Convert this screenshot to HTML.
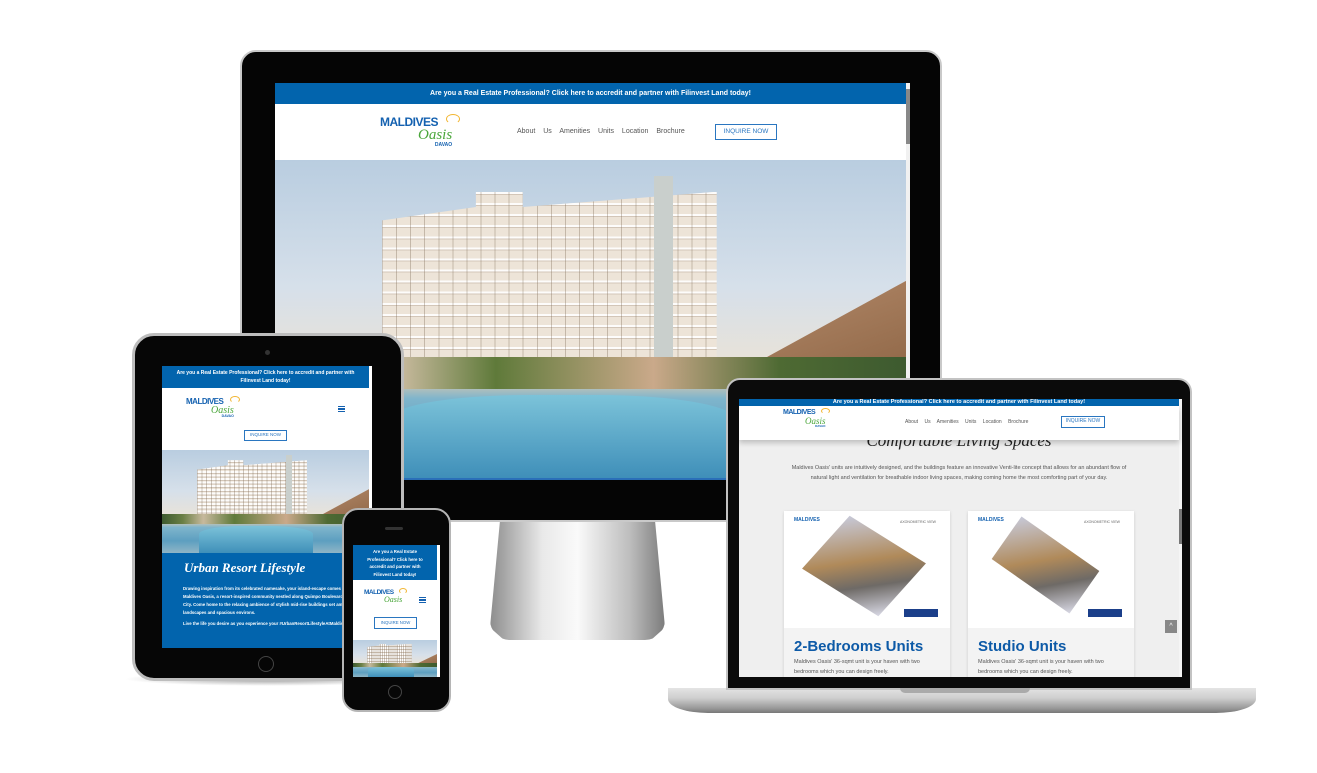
<!DOCTYPE html>
<html><head><meta charset="utf-8"><style>
*{margin:0;padding:0;box-sizing:border-box}
body{width:1317px;height:773px;background:#fff;position:relative;overflow:hidden;font-family:"Liberation Sans",sans-serif}
.a{position:absolute}
.blue{background:#0264ad;color:#fff;text-align:center;font-weight:bold}
.hero{position:absolute;overflow:hidden;background:linear-gradient(180deg,#b9cde0 0%,#d6e0ea 40%,#e7e2da 62%,#cfc6b2 70%,#7fb5cc 75%,#5d9fc0 88%,#8fb5c6 100%)}
.hero .bld{position:absolute;left:17%;top:10%;width:53%;height:60%;background:#ede4d8;
background-image:repeating-linear-gradient(90deg,rgba(120,100,80,.35) 0 1px,transparent 1px 4.2%),repeating-linear-gradient(180deg,rgba(255,255,255,.9) 0 2px,rgba(150,130,110,.3) 2px 3px,transparent 3px 5.8%);clip-path:polygon(0 15%,28% 8%,28% 0,42% 0,42% 8%,100% 0,100% 100%,0 100%)}
.hero .tw{position:absolute;left:60%;top:5%;width:3%;height:65%;background:#c9cfcc}
.hero .roof{position:absolute;right:0;top:38%;width:25%;height:34%;background:linear-gradient(160deg,#b48a6a,#8c6444);clip-path:polygon(100% 0,100% 100%,0 100%,0 80%)}
.hero .trees{position:absolute;left:0;top:62%;width:100%;height:10%;background:linear-gradient(90deg,#3d5a2f,#6a7f45 10%,#c7b99d 20%,#5f7a3a 35%,#caa98a 60%,#4e6a33 80%,#3d5a2f)}
.hero .pool{position:absolute;left:18%;top:74%;width:55%;height:26%;background:linear-gradient(180deg,#7cc3d9,#3f8fb9);border-radius:40% 40% 0 0/30% 30% 0 0}
.logo{position:absolute;line-height:.95;display:inline-block}
.logo b{display:block;color:#1461b0;font-weight:900;letter-spacing:-.5px}
.logo i{display:block;color:#4aa63a;font-family:"Liberation Serif",serif;font-style:italic;text-align:right}
.logo s{display:block;text-decoration:none;color:#1461b0;font-weight:bold;text-align:right}
.logo u{position:absolute;text-decoration:none;border:1.5px solid #f2b632;border-radius:50%;border-bottom-color:transparent}
.btn{position:absolute;border:1.5px solid #2a76c0;color:#2a76c0;text-align:center;background:#fff}
.nav{position:absolute;color:#555}
</style></head><body>

<!-- MONITOR -->
<div class="a" style="left:490px;top:515px;width:175px;height:125px;background:linear-gradient(90deg,#8d8d8d,#e9e9e9 30%,#fafafa 50%,#bdbdbd 80%,#7c7c7c);clip-path:polygon(6% 0,94% 0,100% 90%,92% 100%,8% 100%,0 90%);border-radius:0 0 20px 20px"></div>
<div class="a" style="left:240px;top:50px;width:702px;height:472px;background:#050505;border-radius:16px;border:2px solid #c9c9c9"></div>
<div class="a" style="left:275px;top:83px;width:635px;height:397px;background:#fff;overflow:hidden">
 <div class="blue a" style="left:0;top:0;width:631px;height:21px;font-size:7px;line-height:21px">Are you a Real Estate Professional? Click here to accredit and partner with Filinvest Land today!</div>
 <div class="a" style="right:0;top:0;width:4px;height:397px;background:#f1f1f1"></div><div class="a" style="right:0;top:6px;width:4px;height:55px;background:#888"></div>
 <div class="logo" style="left:105px;top:34px"><b style="font-size:12px">MALDIVES</b><i style="font-size:15px;margin-left:38px">Oasis</i><s style="font-size:5px">DAVAO</s><u style="left:66px;top:-3px;width:14px;height:10px"></u></div>
 <div class="nav" style="left:242px;top:45px;font-size:7px;word-spacing:6px">About&nbsp;Us Amenities Units Location Brochure</div>
 <div class="btn" style="left:440px;top:41px;width:62px;height:16px;font-size:6.5px;line-height:13px">INQUIRE NOW</div>
 <div class="hero" style="left:0;top:77px;width:631px;height:318px"><div class="bld"></div><div class="tw"></div><div class="roof"></div><div class="trees"></div><div class="pool"></div></div>
 <div class="a" style="left:0;top:395px;width:631px;height:2px;background:#2a6fb8"></div>
</div>

<!-- TABLET -->
<div class="a" style="left:124px;top:672px;width:290px;height:14px;background:radial-gradient(ellipse,#999,transparent 70%)"></div>
<div class="a" style="left:132px;top:333px;width:272px;height:348px;background:#060606;border-radius:22px;border:3px solid #bdbdbd"></div>
<div class="a" style="left:265px;top:350px;width:5px;height:5px;border-radius:50%;background:#333"></div>
<div class="a" style="left:258px;top:656px;width:16px;height:16px;border-radius:50%;border:1px solid #444"></div>
<div class="a" style="left:162px;top:366px;width:210px;height:282px;background:#fff;overflow:hidden">
 <div class="blue a" style="left:0;top:0;width:207px;height:22px;font-size:5px;line-height:8px;padding-top:3px">Are you a Real Estate Professional? Click here to accredit and partner with<br>Filinvest Land today!</div>
 <div class="logo" style="left:24px;top:32px"><b style="font-size:8px">MALDIVES</b><i style="font-size:10px;margin-left:25px">Oasis</i><s style="font-size:3.5px">DAVAO</s><u style="left:44px;top:-2px;width:10px;height:7px"></u></div>
 <div class="a" style="left:176px;top:40px;width:7px;height:6px;border-top:1.5px solid #1461b0;border-bottom:1.5px solid #1461b0"></div><div class="a" style="left:176px;top:42.3px;width:7px;height:1.5px;background:#1461b0"></div>
 <div class="btn" style="left:82px;top:64px;width:43px;height:11px;font-size:4.5px;line-height:8px">INQUIRE NOW</div>
 <div class="hero" style="left:0;top:84px;width:207px;height:103px"><div class="bld"></div><div class="tw"></div><div class="roof"></div><div class="trees"></div><div class="pool"></div></div>
 <div class="a" style="left:0;top:187px;width:207px;height:95px;background:#0264ad;color:#fff">
  <div style="position:absolute;left:22px;top:7px;font:italic bold 13px 'Liberation Serif',serif">Urban Resort Lifestyle</div>
  <div style="position:absolute;left:21px;top:32px;width:185px;font-size:4.3px;line-height:8px;font-weight:bold">Drawing inspiration from its celebrated namesake, your island-escape comes alive at Maldives Oasis, a resort-inspired community nestled along Quimpo Boulevard in Davao City. Come home to the relaxing ambience of stylish mid-rise buildings set amid verdant landscapes and spacious environs.<br><span style="display:block;margin-top:3px">Live the life you desire as you experience your #UrbanResortLifestyleAtMaldivesOasis.</span></div>
 </div>
</div>

<!-- PHONE -->
<div class="a" style="left:342px;top:508px;width:109px;height:204px;background:#070707;border-radius:16px;border:2px solid #b5b5b5"></div>
<div class="a" style="left:385px;top:527px;width:18px;height:3px;border-radius:2px;background:#333"></div>
<div class="a" style="left:388px;top:685px;width:14px;height:14px;border-radius:50%;border:1px solid #444"></div>
<div class="a" style="left:353px;top:545px;width:87px;height:132px;background:#fff;overflow:hidden">
 <div class="blue a" style="left:0;top:0;width:84px;height:35px;font-size:4.3px;line-height:7.5px;padding-top:3px">Are you a Real Estate<br>Professional? Click here to<br>accredit and partner with<br>Filinvest Land today!</div>
 <div class="logo" style="left:11px;top:45px"><b style="font-size:6.5px">MALDIVES</b><i style="font-size:8px;margin-left:20px">Oasis</i><u style="left:35px;top:-2px;width:8px;height:6px"></u></div>
 <div class="a" style="left:66px;top:52px;width:7px;height:6px;border-top:1.5px solid #1461b0;border-bottom:1.5px solid #1461b0"></div><div class="a" style="left:66px;top:54.3px;width:7px;height:1.5px;background:#1461b0"></div>
 <div class="btn" style="left:21px;top:72px;width:43px;height:12px;font-size:4.3px;line-height:9px">INQUIRE NOW</div>
 <div class="hero" style="left:0;top:95px;width:84px;height:37px"><div class="bld"></div><div class="roof"></div><div class="trees"></div><div class="pool"></div></div>
</div>

<!-- LAPTOP -->
<div class="a" style="left:668px;top:688px;width:588px;height:25px;background:linear-gradient(180deg,#e4e4e4,#cfcfcf 40%,#9a9a9a 80%,#777);border-radius:0 0 40px 40px/0 0 14px 14px"></div>
<div class="a" style="left:726px;top:378px;width:466px;height:312px;background:#0b0b0b;border-radius:14px 14px 0 0;border:2px solid #c3c3c3"></div>
<div class="a" style="left:900px;top:688px;width:130px;height:5px;background:#aaa;border-radius:0 0 6px 6px"></div>
<div class="a" style="left:739px;top:399px;width:443px;height:278px;background:#efefef;overflow:hidden">
 <div class="blue a" style="left:0;top:0;width:440px;height:7px;font-size:5.5px;line-height:7px">Are you a Real Estate Professional? Click here to accredit and partner with Filinvest Land today!</div>
 <div class="a" style="left:0;top:7px;width:440px;height:34px;background:#fff;box-shadow:0 3px 5px rgba(0,0,0,.2);z-index:2">
  <div class="logo" style="left:44px;top:4px"><b style="font-size:7px">MALDIVES</b><i style="font-size:9px;margin-left:22px">Oasis</i><s style="font-size:3px">DAVAO</s><u style="left:38px;top:-2px;width:9px;height:6px"></u></div>
  <div class="nav" style="left:166px;top:13px;font-size:5px;word-spacing:5px">About&nbsp;Us Amenities Units Location Brochure</div>
  <div class="btn" style="left:322px;top:10px;width:44px;height:12px;font-size:5px;line-height:9px">INQUIRE NOW</div>
 </div>
 <div class="a" style="left:0;top:32px;width:440px;text-align:center;font:italic 17px 'Liberation Serif',serif;color:#222">Comfortable Living Spaces</div>
 <div class="a" style="left:45px;top:64px;width:350px;text-align:center;font-size:5.5px;line-height:10px;color:#555">Maldives Oasis' units are intuitively designed, and the buildings feature an innovative Venti-lite concept that allows for an abundant flow of natural light and ventilation for breathable indoor living spaces, making coming home the most comforting part of your day.</div>
 <div class="a" style="left:45px;top:112px;width:166px;height:170px;background:#f3f3f3;box-shadow:0 1px 3px rgba(0,0,0,.15)">
  <div style="height:117px;background:#fff;position:relative"><div style="position:absolute;left:35px;top:20px;width:90px;height:70px;background:linear-gradient(135deg,#c7c9d8,#b08a5a 45%,#6e6a66 70%,#d8d8e4);transform:rotate(32deg) skewX(-10deg)"></div><div style="position:absolute;left:120px;top:98px;width:34px;height:8px;background:#1b3f8a"></div><div style="position:absolute;left:10px;top:6px;font-size:5px;font-weight:900;color:#1461b0">MALDIVES</div><div style="position:absolute;right:14px;top:9px;font-size:3.5px;color:#666">AXONOMETRIC VIEW</div></div>
  <div style="padding:10px 10px 0;font-size:15px;font-weight:bold;color:#0d5aa7">2-Bedrooms Units</div>
  <div style="padding:2px 10px;font-size:5.5px;line-height:10px;color:#555">Maldives Oasis' 36-sqmt unit is your haven with two bedrooms which you can design freely.</div>
 </div>
 <div class="a" style="left:229px;top:112px;width:166px;height:170px;background:#f3f3f3;box-shadow:0 1px 3px rgba(0,0,0,.15)">
  <div style="height:117px;background:#fff;position:relative"><div style="position:absolute;left:30px;top:28px;width:95px;height:52px;background:linear-gradient(135deg,#c7c9d8,#b08a5a 45%,#6e6a66 70%,#d8d8e4);transform:rotate(35deg)"></div><div style="position:absolute;left:120px;top:98px;width:34px;height:8px;background:#1b3f8a"></div><div style="position:absolute;left:10px;top:6px;font-size:5px;font-weight:900;color:#1461b0">MALDIVES</div><div style="position:absolute;right:14px;top:9px;font-size:3.5px;color:#666">AXONOMETRIC VIEW</div></div>
  <div style="padding:10px 10px 0;font-size:15px;font-weight:bold;color:#0d5aa7">Studio Units</div>
  <div style="padding:2px 10px;font-size:5.5px;line-height:10px;color:#555">Maldives Oasis' 36-sqmt unit is your haven with two bedrooms which you can design freely.</div>
 </div>
 <div class="a" style="left:426px;top:221px;width:12px;height:13px;background:#888;color:#fff;font-size:7px;text-align:center;line-height:13px">^</div>
 <div class="a" style="right:0;top:0;width:3px;height:278px;background:#f5f5f5"></div><div class="a" style="right:0;top:110px;width:3px;height:35px;background:#777"></div>
</div>
</body></html>
